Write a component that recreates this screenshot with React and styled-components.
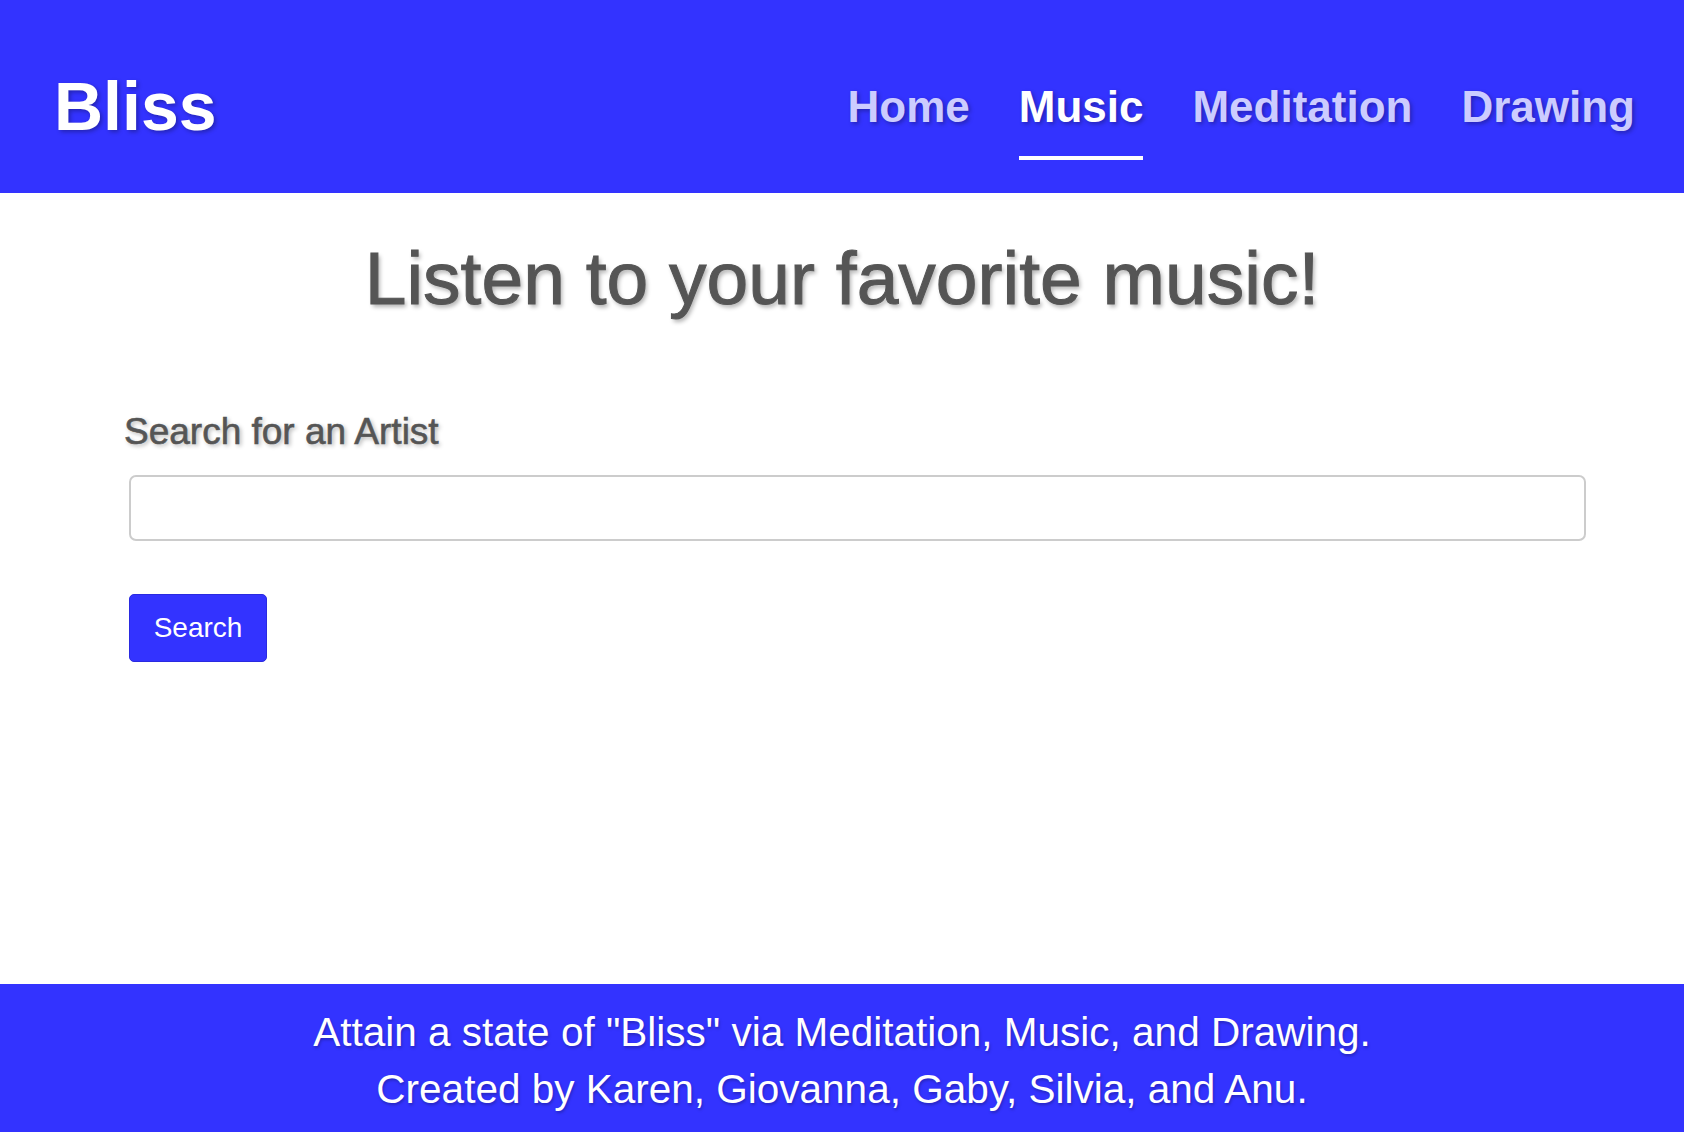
import React, { useState } from 'react';
import styled, { createGlobalStyle } from 'styled-components';

const GlobalStyle = createGlobalStyle`
  * {
    box-sizing: border-box;
  }

  body {
    margin: 0;
    font-family: "Liberation Sans", Arial, Helvetica, sans-serif;
    background: #ffffff;
  }
`;

const Page = styled.div`
  min-height: 100vh;
  display: flex;
  flex-direction: column;
`;

const HeaderBar = styled.header`
  height: 193px;
  background: #3333ff;
  display: flex;
  align-items: center;
  justify-content: space-between;
  padding: 20px 49px 0 54px;
`;

const Logo = styled.div`
  font-size: 68px;
  font-weight: 700;
  color: #ffffff;
  line-height: 1.2;
  text-shadow: 2px 2px 4px rgba(0, 0, 0, 0.3);
  cursor: pointer;
`;

const NavLinks = styled.nav`
  display: flex;
  align-items: center;
  gap: 49px;
`;

const NavLink = styled.a`
  font-size: 44px;
  font-weight: 700;
  line-height: 1.2;
  padding: 28px 0 23px;
  color: ${props => (props.active ? '#ffffff' : '#ccccff')};
  border-bottom: 4px solid ${props => (props.active ? '#ffffff' : 'transparent')};
  text-shadow: 2px 2px 4px rgba(0, 0, 0, 0.3);
  cursor: pointer;
`;

const Main = styled.main`
  flex: 1;
  padding: 40px 98px 0 124px;
`;

const Title = styled.h1`
  margin: 0 0 87px -26px;
  font-size: 75px;
  font-weight: 400;
  line-height: 1.2;
  color: #555555;
  text-align: center;
  -webkit-text-stroke: 1px #555555;
  text-shadow: 2px 3px 4px rgba(0, 0, 0, 0.3);
`;

const Label = styled.label`
  display: block;
  font-size: 37px;
  line-height: 1.2;
  color: #555555;
  -webkit-text-stroke: 0.6px #555555;
  text-shadow: 2px 2px 4px rgba(0, 0, 0, 0.3);
  margin-bottom: 21px;
`;

const SearchInput = styled.input`
  display: block;
  width: calc(100% - 5px);
  height: 66px;
  margin: 0 0 53px 5px;
  border: 2px solid #cccccc;
  border-radius: 7px;
  padding: 0 16px;
  font-family: inherit;
  font-size: 28px;
  color: #555555;
  outline: none;
`;

const SearchButton = styled.button`
  margin-left: 5px;
  width: 138px;
  height: 68px;
  background: #3333ff;
  color: #ffffff;
  border: 1px solid #2a2ae0;
  border-radius: 5px;
  font-family: inherit;
  font-size: 28px;
  cursor: pointer;
`;

const Footer = styled.footer`
  height: 148px;
  background: #3333ff;
  color: #ffffff;
  text-align: center;
  padding-top: 20px;
  font-size: 40.5px;
  line-height: 57px;
  text-shadow: 1px 2px 3px rgba(0, 0, 0, 0.25);
`;

const navLinks = ['Home', 'Music', 'Meditation', 'Drawing'];

const App = () => {
  const [artist, setArtist] = useState('');

  return (
    <Page>
      <GlobalStyle />
      <HeaderBar>
        <Logo>Bliss</Logo>
        <NavLinks>
          {navLinks.map(link => (
            <NavLink key={link} active={link === 'Music' ? 1 : 0}>
              {link}
            </NavLink>
          ))}
        </NavLinks>
      </HeaderBar>
      <Main>
        <Title>Listen to your favorite music!</Title>
        <Label htmlFor="artist">Search for an Artist</Label>
        <SearchInput
          id="artist"
          value={artist}
          onChange={e => setArtist(e.target.value)}
        />
        <SearchButton>Search</SearchButton>
      </Main>
      <Footer>
        <div>Attain a state of "Bliss" via Meditation, Music, and Drawing.</div>
        <div>Created by Karen, Giovanna, Gaby, Silvia, and Anu.</div>
      </Footer>
    </Page>
  );
};

export default App;
